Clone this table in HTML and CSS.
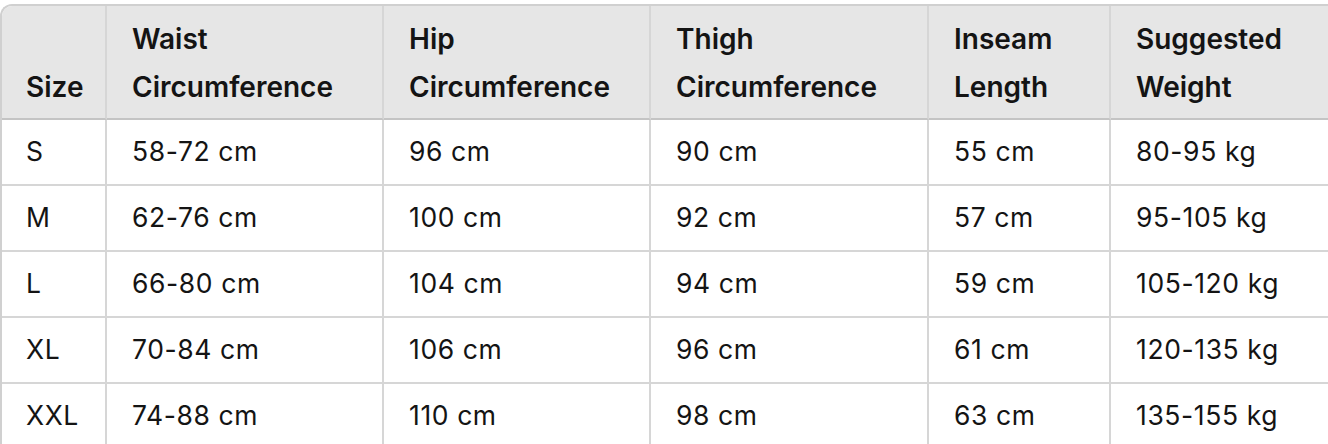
FILE: index.html
```html
<!DOCTYPE html>
<html lang="en">
<head>
<meta charset="utf-8">
<title>Size Chart</title>
<link rel="stylesheet" href="styles.css">
</head>
<body>
<div class="chart">
  <table class="size-table">
    <colgroup>
      <col class="c-size">
      <col class="c-waist">
      <col class="c-hip">
      <col class="c-thigh">
      <col class="c-inseam">
      <col class="c-weight">
    </colgroup>
    <thead>
      <tr>
        <th>Size</th>
        <th>Waist<br>Circumference</th>
        <th>Hip<br>Circumference</th>
        <th>Thigh<br>Circumference</th>
        <th>Inseam<br>Length</th>
        <th>Suggested<br>Weight</th>
      </tr>
    </thead>
    <tbody>
      <tr><td>S</td><td>58-72 cm</td><td>96 cm</td><td>90 cm</td><td>55 cm</td><td>80-95 kg</td></tr>
      <tr><td>M</td><td>62-76 cm</td><td>100 cm</td><td>92 cm</td><td>57 cm</td><td>95-105 kg</td></tr>
      <tr><td>L</td><td>66-80 cm</td><td>104 cm</td><td>94 cm</td><td>59 cm</td><td>105-120 kg</td></tr>
      <tr><td>XL</td><td>70-84 cm</td><td>106 cm</td><td>96 cm</td><td>61 cm</td><td>120-135 kg</td></tr>
      <tr><td>XXL</td><td>74-88 cm</td><td>110 cm</td><td>98 cm</td><td>63 cm</td><td>135-155 kg</td></tr>
    </tbody>
  </table>
</div>
</body>
</html>
```

FILE: styles.css
```css
html, body {
  margin: 0;
  padding: 0;
  background: #ffffff;
  overflow: hidden;
}

body {
  font-family: Inter, "Liberation Sans", Arial, sans-serif;
  color: #141414;
}

.chart {
  margin-top: 4px;
  width: 1326px;
  border-top: 2px solid #d0d0d0;
  border-left: 2px solid #d0d0d0;
  border-top-left-radius: 12px;
  overflow: hidden;
}

.size-table {
  table-layout: fixed;
  border-collapse: separate;
  border-spacing: 0;
  width: 1326px;
}

.c-size { width: 105px; }
.c-waist { width: 277px; }
.c-hip { width: 267px; }
.c-thigh { width: 278px; }
.c-inseam { width: 182px; }
.c-weight { width: 217px; }

.size-table th,
.size-table td {
  box-sizing: border-box;
  text-align: left;
  padding: 0 0 0 24px;
  border-right: 2px solid #d6d6d6;
  border-bottom: 2px solid #d6d6d6;
  white-space: nowrap;
}

.size-table th:last-child,
.size-table td:last-child {
  border-right: none;
}

.size-table th {
  background: #e6e6e6;
  font-weight: 600;
  font-size: 28px;
  line-height: 48px;
  height: 114px;
  padding-top: 6px;
  padding-bottom: 7px;
  vertical-align: bottom;
  border-bottom-color: #c4c4c4;
}

.size-table th + th,
.size-table td + td {
  padding-left: 25px;
}

.size-table td {
  font-size: 26.5px;
  letter-spacing: 0.6px;
  font-weight: 400;
  height: 66px;
  vertical-align: middle;
  padding-top: 0;
  padding-bottom: 2px;
}
```
